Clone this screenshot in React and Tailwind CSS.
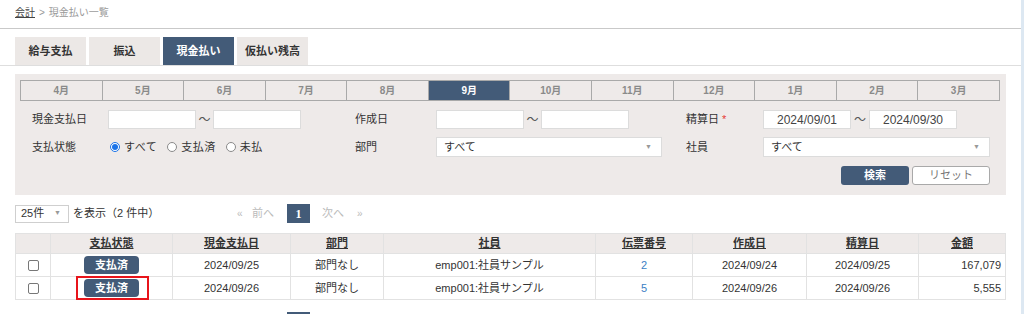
const months = ['4月', '5月', '6月', '7月', '8月', '9月', '10月', '11月', '12月', '1月', '2月', '3月'];
const tabs = ['給与支払', '振込', '現金払い', '仮払い残高'];

const rows = [
  { paid: '2024/09/25', no: '2', created: '2024/09/24', settle: '2024/09/25', amount: '167,079' },
  { paid: '2024/09/26', no: '5', created: '2024/09/26', settle: '2024/09/26', amount: '5,555' },
];

const cols = [
  { key: 'check', label: '', w: 'w-[35px]' },
  { key: 'status', label: '支払状態', w: 'w-[122px]' },
  { key: 'paid', label: '現金支払日', w: 'w-[118px]' },
  { key: 'dept', label: '部門', w: 'w-[93px]' },
  { key: 'emp', label: '社員', w: 'w-[212px]' },
  { key: 'no', label: '伝票番号', w: 'w-[97px]' },
  { key: 'created', label: '作成日', w: 'w-[114px]' },
  { key: 'settle', label: '精算日', w: 'w-[112px]' },
  { key: 'amount', label: '金額', w: 'w-[87px]' },
];

function Input({ value = '', w = 'w-[88px]' }) {
  return (
    <div className={`${w} h-[19px] bg-white border border-[#dcdcdc] flex items-center justify-center text-[12px] text-[#444]`}>
      {value}
    </div>
  );
}

function Select({ value, w }) {
  return (
    <div className={`${w} h-[20px] bg-white border border-[#dcdcdc] flex items-center justify-between pl-[7px] pr-[9px] text-[11px] text-[#333]`}>
      <span>{value}</span>
      <span className="text-[7px] text-[#999]">▼</span>
    </div>
  );
}

function Radio({ checked, label }) {
  return (
    <span className="flex items-center gap-[4px] mr-[10px]">
      <span
        className={`w-[10px] h-[10px] rounded-full border flex items-center justify-center bg-white ${
          checked ? 'border-[#1a73e8]' : 'border-[#8a8a8a]'
        }`}
      >
        {checked && <span className="w-[6px] h-[6px] rounded-full bg-[#1a73e8]" />}
      </span>
      <span className="tracking-[0.5px]">{label}</span>
    </span>
  );
}

function Tilde({ w = 'w-[17px]' }) {
  return <span className={`${w} text-center text-[#555] text-[12px]`}>〜</span>;
}

export default function App() {
  return (
    <div className="w-[1024px] h-[314px] overflow-hidden bg-white flex items-start font-['Liberation_Sans','Noto_Sans_CJK_JP',sans-serif] text-[#333]">
      <div className="w-[1021px]">
        {/* breadcrumb */}
        <div className="h-[29px] border-b border-[#c9c9c9] px-[15px] pt-[5px] text-[10px] flex gap-[4px]">
          <span className="underline text-[#444]">会計</span>
          <span className="text-[#999]">&gt;</span>
          <span className="text-[#999]">現金払い一覧</span>
        </div>

        {/* tabs */}
        <div className="mt-[8px] px-[15px] flex gap-[3px] border-b border-[#dedede]">
          {tabs.map((t) => (
            <div
              key={t}
              className={`w-[71px] h-[28px] flex items-center justify-center text-[11px] font-bold ${
                t === '現金払い' ? 'bg-[#435b78] text-white' : 'bg-[#ece8e6] text-[#333]'
              }`}
            >
              {t}
            </div>
          ))}
        </div>

        {/* filter panel */}
        <div className="mt-[8px] ml-[15px] w-[991px] bg-[#eeeae9] pt-[6px] pb-[10px] px-[5px]">
          <div className="flex w-[980px] h-[21px] border border-[#a9a9a9]">
            {months.map((m, i) => (
              <div
                key={m}
                className={`flex-1 flex items-center justify-center text-[10px] font-bold ${
                  i > 0 ? 'border-l border-[#a9a9a9]' : ''
                } ${m === '9月' ? 'bg-[#435b78] text-white' : 'text-[#8a8a8a]'}`}
              >
                {m}
              </div>
            ))}
          </div>

          <div className="mt-[9px] flex items-center text-[11px] pl-[12px]">
            <div className="w-[323px] flex items-center">
              <span className="w-[76px]">現金支払日</span>
              <Input />
              <Tilde />
              <Input />
            </div>
            <div className="w-[331px] flex items-center">
              <span className="w-[81px]">作成日</span>
              <Input />
              <Tilde />
              <Input />
            </div>
            <div className="flex items-center">
              <span className="w-[77px]">
                精算日 <span className="text-[#e53935]">*</span>
              </span>
              <Input value="2024/09/01" />
              <Tilde w="w-[18px]" />
              <Input value="2024/09/30" />
            </div>
          </div>

          <div className="mt-[8px] flex items-center text-[11px] pl-[12px]">
            <div className="w-[323px] flex items-center">
              <span className="w-[78px]">支払状態</span>
              <Radio checked label="すべて" />
              <Radio label="支払済" />
              <Radio label="未払" />
            </div>
            <div className="w-[331px] flex items-center">
              <span className="w-[81px]">部門</span>
              <Select value="すべて" w="w-[226px]" />
            </div>
            <div className="flex items-center">
              <span className="w-[77px]">社員</span>
              <Select value="すべて" w="w-[227px]" />
            </div>
          </div>

          <div className="mt-[9px] flex justify-end gap-[3px] pr-[11px]">
            <div className="w-[68px] h-[19px] rounded-[3px] bg-[#435b78] text-white text-[11px] font-bold flex items-center justify-center">
              検索
            </div>
            <div className="w-[78px] h-[19px] rounded-[3px] bg-white border border-[#a9a9a9] text-[#777] text-[11px] flex items-center justify-center">
              リセット
            </div>
          </div>
        </div>

        {/* paging */}
        <div className="mt-[9px] ml-[15px] flex items-center text-[11px]">
          <div className="w-[54px] h-[18px] border border-[#cfcfcf] flex items-center justify-between pl-[5px] pr-[7px]">
            <span>25件</span>
            <span className="text-[7px] text-[#999]">▼</span>
          </div>
          <span className="ml-[4px] w-[164px]">を表示（2 件中）</span>
          <div className="flex items-center text-[11px] text-[#bbb]">
            <span className="text-[10px] w-[15px]">«</span>
            <span className="w-[35px]">前へ</span>
            <span className="w-[23px] h-[19px] bg-[#435b78] text-white font-bold text-[12px] flex items-center justify-center font-['Liberation_Serif',serif]">
              1
            </span>
            <span className="ml-[12px] w-[35px]">次へ</span>
            <span className="text-[10px]">»</span>
          </div>
        </div>

        {/* table */}
        <div className="relative mt-[10px] ml-[15px] w-[990px]">
          <table className="border-collapse text-[11px] table-fixed w-[990px]">
            <thead>
              <tr className="h-[20px] bg-[#eeeae9]">
                {cols.map((c) => (
                  <th key={c.key} className={`${c.w} border border-[#e2e2e2] font-bold`}>
                    <span className="underline">{c.label}</span>
                  </th>
                ))}
              </tr>
            </thead>
            <tbody>
              {rows.map((r) => (
                <tr key={r.no} className="h-[23px]">
                  <td className="border border-[#e2e2e2] text-center">
                    <span className="inline-block w-[11px] h-[11px] border border-[#777] rounded-[2px] align-middle" />
                  </td>
                  <td className="border border-[#e2e2e2] text-center">
                    <span className="inline-flex w-[55px] h-[18px] rounded-[4px] bg-[#435b78] text-white font-bold items-center justify-center">
                      支払済
                    </span>
                  </td>
                  <td className="border border-[#e2e2e2] text-center">{r.paid}</td>
                  <td className="border border-[#e2e2e2] text-center">部門なし</td>
                  <td className="border border-[#e2e2e2] text-center">emp001:社員サンプル</td>
                  <td className="border border-[#e2e2e2] text-center text-[#3b7fc4]">{r.no}</td>
                  <td className="border border-[#e2e2e2] text-center">{r.created}</td>
                  <td className="border border-[#e2e2e2] text-center">{r.settle}</td>
                  <td className="border border-[#e2e2e2] text-right pr-[4px]">{r.amount}</td>
                </tr>
              ))}
            </tbody>
          </table>
          {/* annotation box */}
          <div className="absolute left-[61px] top-[43px] w-[73px] h-[24px] border-2 border-[#e8141b]" />
        </div>

        <div className="mt-[12px] ml-[287px] w-[23px] h-[19px] bg-[#435b78]" />
      </div>
      <div className="w-[3px] h-[314px] bg-[#dde8f2]" />
    </div>
  );
}
